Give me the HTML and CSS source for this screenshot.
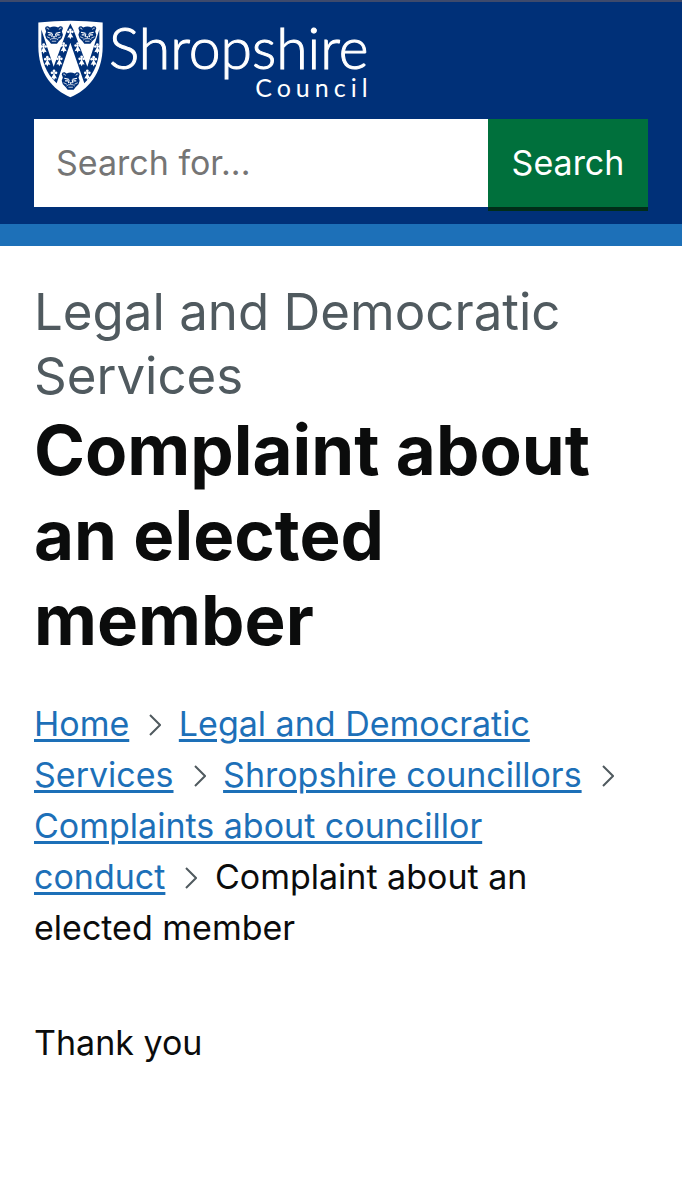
FILE: index.html
```
<!DOCTYPE html>
<html lang="en">
<head>
    <meta charset="UTF-8">
    <meta name="viewport" content="width=device-width, initial-scale=1.0">
    <title>Complaint about an elected member - Shropshire Council</title>
    <link rel="stylesheet" href="styles.css">
</head>
<body>

    <header class="site-header">
        <a class="logo" href="#" aria-label="Shropshire Council home">
            <svg class="logo-shield" viewBox="24 27 195 231" aria-hidden="true">
                <defs>
                    <!-- ermine spot -->
                    <g id="spot" fill="#fff">
                        <circle cx="0" cy="-12" r="4"/>
                        <circle cx="-6" cy="-6" r="4"/>
                        <circle cx="6" cy="-6" r="4"/>
                        <path d="M-2-10h4v8l7 13-6-1-3 6-3-6-6 1 7-13z"/>
                    </g>
                    <!-- leopard face -->
                    <g id="face" transform="scale(1.12)">
                        <path fill="#003078" d="M-24-17q1-6 8-5l5 3q11-5 22 0l5-3q7-1 8 5l-3 9 3 9-3 9-8 8-5 7H-8l-5-7-8-8-3-9 3-9z"/>
                        <g fill="none" stroke="#fff" stroke-width="2">
                            <path d="M-20-17q5-2 6 4M20-17q-5-2-6 4"/>
                            <path stroke-width="3" d="M-17-6l12 3M17-6L5-3M-15 1h8M15 1H7M-4-2l-2 9M4-2l2 9"/>
                            <path d="M-19 6l9 4M19 6l-9 4M-11 15q3-5 11-4 8-1 11 4M-6 18h12"/>
                        </g>
                        <path fill="#fff" d="M-4 5h8L0 10z"/>
                    </g>
                </defs>
                <path fill="#fff" d="M25 33q96-10 193 0v71c0 82-44 131-97 153C69 235 25 186 25 104z"/>
                <path fill="#003078" d="M34 54l37 112 41-112 9-18 9 18 42 112 36-112v50c0 43-13 80-45 111l-42-121-41 121c-33-31-46-68-46-111z"/>
                <use href="#spot" x="121" y="67"/>
                <use href="#spot" x="101" y="108"/>
                <use href="#spot" x="143" y="108"/>
                <use href="#spot" x="41" y="111"/>
                <use href="#spot" x="202" y="111"/>
                <use href="#spot" x="88" y="148"/>
                <use href="#spot" x="155" y="148"/>
                <use href="#spot" x="52" y="149"/>
                <use href="#spot" x="191" y="149"/>
                <use href="#spot" x="72" y="190"/>
                <use href="#spot" x="172" y="190"/>
                <use href="#face" x="72" y="69"/>
                <use href="#face" x="172" y="69"/>
                <use href="#face" x="122" y="207"/>
            </svg>
            <span class="logo-text">
                <span class="logo-name">Shropshire</span>
                <span class="logo-type">Council</span>
            </span>
        </a>

        <form class="search" action="#" role="search">
            <input class="search-input" type="search" name="q" placeholder="Search for..." aria-label="Search for">
            <button class="search-button" type="submit">Search</button>
        </form>
    </header>

    <main class="content">
        <h1 class="title">
            <span class="title-caption">Legal and Democratic Services</span>
            Complaint about an elected member
        </h1>

        <nav aria-label="Breadcrumb">
            <ol class="breadcrumbs">
                <li><a href="#">Home</a><svg class="chevron" viewBox="0 0 12 22" aria-hidden="true"><path d="M1 1l10 10L1 21"/></svg></li>
                <li><a href="#">Legal and Democratic Services</a><svg class="chevron" viewBox="0 0 12 22" aria-hidden="true"><path d="M1 1l10 10L1 21"/></svg></li>
                <li><a href="#">Shropshire councillors</a><svg class="chevron" viewBox="0 0 12 22" aria-hidden="true"><path d="M1 1l10 10L1 21"/></svg></li>
                <li><a href="#">Complaints about councillor conduct</a><svg class="chevron" viewBox="0 0 12 22" aria-hidden="true"><path d="M1 1l10 10L1 21"/></svg></li>
                <li aria-current="page">Complaint about an elected member</li>
            </ol>
        </nav>

        <p class="message">Thank you</p>
    </main>

</body>
</html>
```
FILE: styles.css
```
:root {
    --navy: #003078;
    --blue: #1d70b8;
    --green: #00703c;
    --text: #0b0c0c;
    --grey: #505a5f;
}

* { box-sizing: border-box; }

body {
    margin: 0;
    background: #fff;
    color: var(--text);
    font-family: Inter, "Liberation Sans", sans-serif;
    font-size: 34px;
    line-height: 51px;
}

/* Header */
.site-header {
    padding: 18px 34px 17px;
    background: var(--navy);
    border-top: 2px solid #3e4a6c;
    border-bottom: 22px solid var(--blue);
}

.logo {
    display: flex;
    width: max-content;
    height: 79px;
    gap: 6px;
    padding-left: 4px;
    color: #fff;
    text-decoration: none;
}
.logo-shield { width: 65px; height: 78px; }
.logo-text {
    display: flex;
    flex-direction: column;
    align-items: flex-end;
    font-family: Lato, "Open Sans", sans-serif;
}
.logo-name {
    font-size: 57px;
    font-weight: 300;
    line-height: 54px;
    -webkit-text-stroke: 1px #fff;
}
.logo-type {
    margin-right: -4px;
    font-size: 25px;
    line-height: 26px;
    letter-spacing: 5px;
}

.search { display: flex; margin-top: 20px; }
.search-input {
    flex: 1;
    min-width: 0;
    height: 88px;
    padding: 0 22px 2px;
    border: 0;
    border-radius: 0;
    background: #fff;
    color: var(--text);
    font: inherit;
    appearance: none;
}
.search-input::placeholder { color: #757575; opacity: 1; }
.search-button {
    width: 160px;
    height: 88px;
    padding: 0 0 2px;
    border: 0;
    background: var(--green);
    box-shadow: 0 4px 0 #002d18;
    color: #fff;
    font: inherit;
}

/* Content */
.content { padding: 34px; }

.title {
    margin: 0 0 35px;
    font-size: 69px;
    font-weight: 700;
    line-height: 85px;
}
.title-caption {
    display: block;
    color: var(--grey);
    font-size: 51px;
    font-weight: 400;
    line-height: 64px;
}

.breadcrumbs {
    margin: 0 0 64px;
    padding: 0;
    list-style: none;
}
.breadcrumbs li { display: inline; }
/* room for the chevron, so it always stays with the last word */
.breadcrumbs li:not(:last-child) { padding-right: 40px; }
.breadcrumbs a {
    color: var(--blue);
    text-decoration-thickness: 3px;
    text-underline-offset: 3px;
}

.chevron {
    position: absolute;
    width: 12px;
    height: 22px;
    margin: 16px 0 0 20px;
    fill: none;
    stroke: var(--grey);
    stroke-width: 2;
}

.message { margin: 0; }
```
